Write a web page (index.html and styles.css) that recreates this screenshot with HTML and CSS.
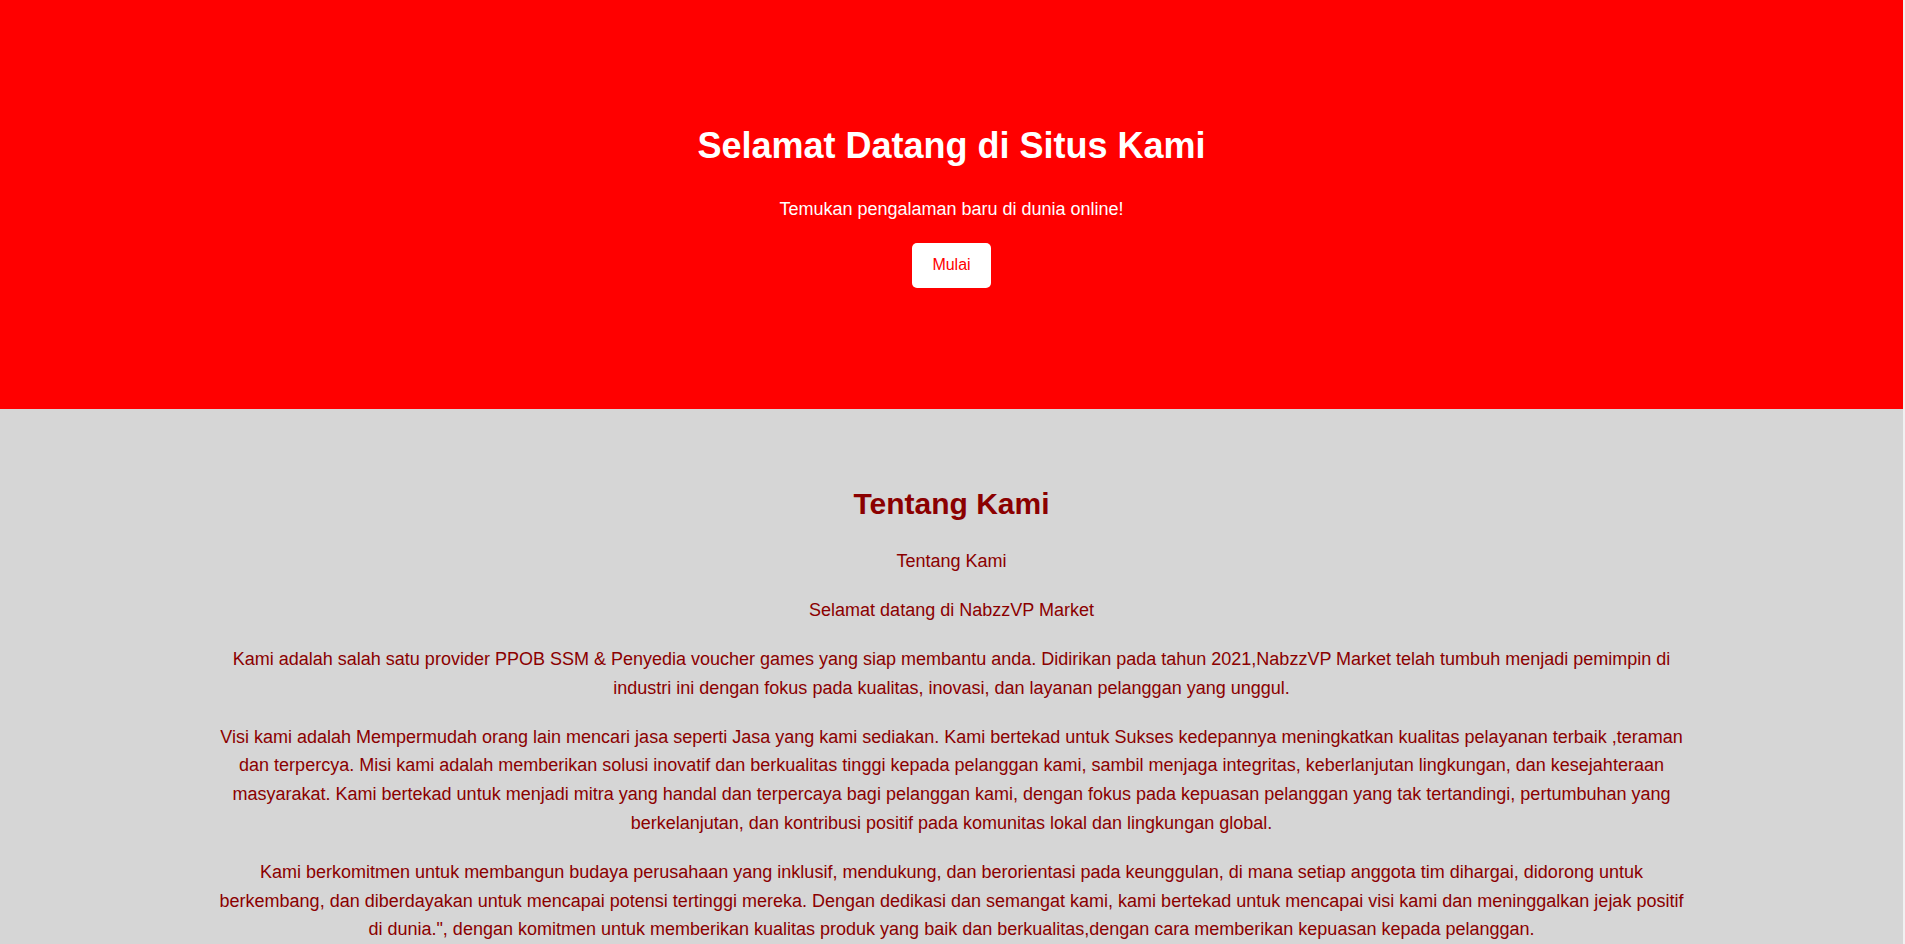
FILE: index.html
```html
<!DOCTYPE html>
<html lang="id">
<head>
<meta charset="utf-8">
<title>NabzzVP Market</title>
<link rel="stylesheet" href="styles.css">
</head>
<body>
<div class="page">
  <header class="hero">
    <h1 class="hero-title">Selamat Datang di Situs Kami</h1>
    <p class="hero-sub">Temukan pengalaman baru di dunia online!</p>
    <div class="hero-actions">
      <button class="btn">Mulai</button>
    </div>
  </header>
  <section class="about">
    <div class="about-inner">
      <h2 class="about-title">Tentang Kami</h2>
      <p>Tentang Kami</p>
      <p>Selamat datang di NabzzVP Market</p>
      <p>Kami adalah salah satu provider PPOB SSM &amp; Penyedia voucher games yang siap membantu anda. Didirikan pada tahun 2021,NabzzVP Market telah tumbuh menjadi pemimpin di industri ini dengan fokus pada kualitas, inovasi, dan layanan pelanggan yang unggul.</p>
      <p>Visi kami adalah Mempermudah orang lain mencari jasa seperti Jasa yang kami sediakan. Kami bertekad untuk Sukses kedepannya meningkatkan kualitas pelayanan terbaik ,teraman dan terpercya. Misi kami adalah memberikan solusi inovatif dan berkualitas tinggi kepada pelanggan kami, sambil menjaga integritas, keberlanjutan lingkungan, dan kesejahteraan masyarakat. Kami bertekad untuk menjadi mitra yang handal dan terpercaya bagi pelanggan kami, dengan fokus pada kepuasan pelanggan yang tak tertandingi, pertumbuhan yang berkelanjutan, dan kontribusi positif pada komunitas lokal dan lingkungan global.</p>
      <p>Kami berkomitmen untuk membangun budaya perusahaan yang inklusif, mendukung, dan berorientasi pada keunggulan, di mana setiap anggota tim dihargai, didorong untuk berkembang, dan diberdayakan untuk mencapai potensi tertinggi mereka. Dengan dedikasi dan semangat kami, kami bertekad untuk mencapai visi kami dan meninggalkan jejak positif di dunia.", dengan komitmen untuk memberikan kualitas produk yang baik dan berkualitas,dengan cara memberikan kepuasan kepada pelanggan.</p>
    </div>
  </section>
</div>
</body>
</html>
```

FILE: styles.css
```css
html {
  background: #f1f1f1;
}
body {
  margin: 0;
  font-family: "Liberation Sans", Arial, sans-serif;
  line-height: 1.6;
}
.page {
  margin-right: 2px;
}
.hero {
  background: #ff0000;
  color: #ffffff;
  text-align: center;
  padding: 117px 20px 121px;
}
.hero-title {
  margin: 0 0 20px;
  font-size: 36px;
  font-weight: bold;
}
.hero-sub {
  margin: 0 0 20px;
  font-size: 18px;
}
.hero-actions {
  display: flex;
  justify-content: center;
}
.btn {
  font-family: "Liberation Sans", Arial, sans-serif;
  font-size: 16px;
  line-height: 18px;
  color: #ff0000;
  background: #ffffff;
  border: none;
  border-radius: 5px;
  padding: 13px 20px 14px;
  cursor: pointer;
}
.about {
  background: #d6d6d6;
  color: #8b0000;
  text-align: center;
  padding: 52px 20px 40px;
}
.about-inner {
  max-width: 1480px;
  margin: 0 auto;
}
.about-title {
  margin: 20px 0 20px;
  font-size: 30px;
  line-height: 46px;
  font-weight: bold;
}
.about p {
  margin: 20px 0;
  font-size: 18px;
}
```
